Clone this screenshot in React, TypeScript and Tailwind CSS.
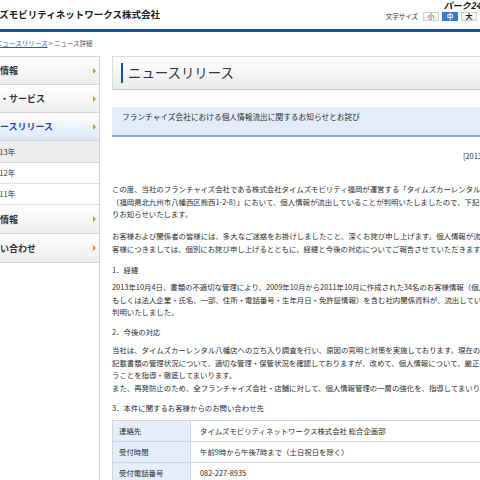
const jp = "font-['Noto_Sans_CJK_JP','Noto_Sans',sans-serif]";

const navItems = [
  { label: "会社情報", h: "h-[28px]" },
  { label: "事業・サービス", h: "h-[28px]" },
];

function Arrow() {
  return <span className="border-y-[3px] border-y-transparent border-l-[3px] border-l-[#f08a00]" />;
}

function NavItem({ label, active, h }: { label: string; active?: boolean; h: string }) {
  return (
    <div
      className={`${h} flex items-center justify-between pl-[12px] pr-[3px] border-b border-[#d6d6d6] ${
        active
          ? "bg-gradient-to-b from-white to-[#dbe7f7] text-[#1c4b9b]"
          : "bg-gradient-to-b from-white to-[#eeeeee] text-[#333]"
      }`}
    >
      <span className="text-[9px] font-bold leading-none whitespace-nowrap">{label}</span>
      <Arrow />
    </div>
  );
}

function SubItem({ label, current, h }: { label: string; current?: boolean; h: string }) {
  return (
    <div
      className={`${h} flex items-center pl-[21px] border-b border-dotted border-[#c8c8c8] ${
        current ? "bg-[#eeeeee]" : "bg-white"
      }`}
    >
      <span className="text-[7.5px] leading-none text-[#333]">{label}</span>
    </div>
  );
}

function Lines({ lines, className }: { lines: string[]; className?: string }) {
  return (
    <div className={className}>
      {lines.map((l) => (
        <div key={l} className="whitespace-nowrap h-[12.5px] leading-[12.5px]">
          {l}
        </div>
      ))}
    </div>
  );
}

const rows = [
  ["連絡先", "タイムズモビリティネットワークス株式会社 総合企画部"],
  ["受付時間", "午前9時から午後7時まで（土日祝日を除く）"],
  ["受付電話番号", "082-227-8935"],
];

export default function App() {
  return (
    <div className={`w-[480px] h-[480px] overflow-hidden bg-white ${jp}`}>
      <div className="w-[600px] -ml-[30px]">
        {/* header */}
        <div className="h-[29px] flex items-start">
          <div className="mt-[9px] pl-[1px] text-[9.5px] leading-[11px] font-bold text-[#222] whitespace-nowrap">
            タイムズモビリティネットワークス株式会社
          </div>
          <div className="ml-auto pr-[89px] flex flex-col items-end">
            <div className="mt-[1px] text-[9px] leading-[9px] font-bold italic text-[#111] whitespace-nowrap">
              パーク24
            </div>
            <div className="mt-[2px] mr-[4px] flex items-center">
              <span className="text-[6.5px] leading-none text-[#333] mr-[5px]">文字サイズ</span>
              <span className="w-[16px] h-[9px] flex items-center justify-center border border-[#d4d4d4] bg-gradient-to-b from-white to-[#eee] text-[6.5px] leading-none text-[#333]">
                小
              </span>
              <span className="ml-[3px] w-[16px] h-[9px] flex items-center justify-center bg-[#2f7ad6] text-[6.5px] leading-none text-white font-bold">
                中
              </span>
              <span className="ml-[3px] w-[16px] h-[9px] flex items-center justify-center border border-[#d4d4d4] bg-gradient-to-b from-white to-[#eee] text-[7px] leading-none font-bold text-[#222]">
                大
              </span>
            </div>
          </div>
        </div>
        <div className="h-[3px] bg-[#1d4f9f]" />

        {/* breadcrumb */}
        <div className="mt-[6px] h-[10px] text-[6.5px] leading-[10px] text-[#555] whitespace-nowrap">
          トップ &gt; <span className="text-[#2a5db0] underline">ニュースリリース</span> &gt; ニュース詳細
        </div>

        {/* main */}
        <div className="mt-[8px] flex gap-[12px]">
          <div className="w-[130px] shrink-0 border-r border-[#d6d6d6] border-t">
            {navItems.map((n) => (
              <NavItem key={n.label} label={n.label} h="h-[28px]" />
            ))}
            <NavItem label="ニュースリリース" h="h-[28px]" active />
            <SubItem label="2013年" h="h-[22px]" current />
            <SubItem label="2012年" h="h-[21px]" />
            <SubItem label="2011年" h="h-[21px]" />
            <NavItem label="採用情報" h="h-[29px]" />
            <NavItem label="お問い合わせ" h="h-[29px]" />
          </div>

          <div className="flex-1 text-[#2c2c2c] text-[7.4px]">
            <div className="h-[34px] flex items-center border border-[#dcdcdc] border-b-[#c4c4c4] bg-gradient-to-b from-white to-[#ebebeb]">
              <div className="ml-[8px] w-[2px] h-[20px] bg-[#1d4f9f]" />
              <div className="ml-[5px] text-[13.4px] leading-none text-[#333]">ニュースリリース</div>
            </div>

            <div className="mt-[17px] h-[30px] bg-[#e3edf9] border-b-2 border-[#86a7d3] pl-[10px] pt-[5px]">
              <div className="text-[7.7px] leading-[10px] whitespace-nowrap text-[#2c2c2c]">
                フランチャイズ会社における個人情報流出に関するお知らせとお詫び
              </div>
            </div>

            <div className="mt-[13px] pl-[351px] h-[12px] leading-[12px] whitespace-nowrap">[2013年10月11日]</div>

            <Lines
              className="mt-[21px]"
              lines={[
                "この度、当社のフランチャイズ会社である株式会社タイムズモビリティ福岡が運営する「タイムズカーレンタル八幡店",
                "（福岡県北九州市八幡西区熊西1-2-8）」において、個人情報が流出していることが判明いたしましたので、下記のとお",
                "りお知らせいたします。",
              ]}
            />
            <Lines
              className="mt-[9.5px]"
              lines={[
                "お客様および関係者の皆様には、多大なご迷惑をお掛けしましたこと、深くお詫び申し上げます。個人情報が流出したお",
                "客様につきましては、個別にお詫び申し上げるとともに、経緯と今後の対応についてご報告させていただきます。",
              ]}
            />
            <Lines className="mt-[9px]" lines={["1．経緯"]} />
            <Lines
              className="mt-[4.5px]"
              lines={[
                "2013年10月4日、書類の不適切な管理により、2009年10月から2011年10月に作成された34名のお客様情報（個人",
                "もしくは法人企業・氏名、一部、住所・電話番号・生年月日・免許証情報）を含む社内関係資料が、流出していたことが",
                "判明いたしました。",
              ]}
            />
            <Lines className="mt-[7.5px]" lines={["2．今後の対応"]} />
            <Lines
              className="mt-[5.5px]"
              lines={[
                "当社は、タイムズカーレンタル八幡店への立ち入り調査を行い、原因の究明と対策を実施しております。現在の個人情報",
                "記載書類の管理状況について、適切な管理・保管状況を確認しておりますが、改めて、個人情報について、厳正に取り扱",
                "うことを指導・徹底してまいります。",
                "また、再発防止のため、全フランチャイズ会社・店舗に対して、個人情報管理の一層の強化を、指導してまいります。",
              ]}
            />
            <Lines className="mt-[8px]" lines={["3．本件に関するお客様からのお問い合わせ先"]} />

            <table className="mt-[5px] w-full border-collapse">
              <tbody>
                {rows.map(([k, v]) => (
                  <tr key={k} className="h-[21px]">
                    <th className="w-[78px] bg-[#e6eef9] border border-[#cfd6df] pl-[6px] text-left font-normal whitespace-nowrap">
                      {k}
                    </th>
                    <td className="border border-[#cfd6df] pl-[9px] whitespace-nowrap">{v}</td>
                  </tr>
                ))}
              </tbody>
            </table>
          </div>
        </div>
      </div>
    </div>
  );
}
